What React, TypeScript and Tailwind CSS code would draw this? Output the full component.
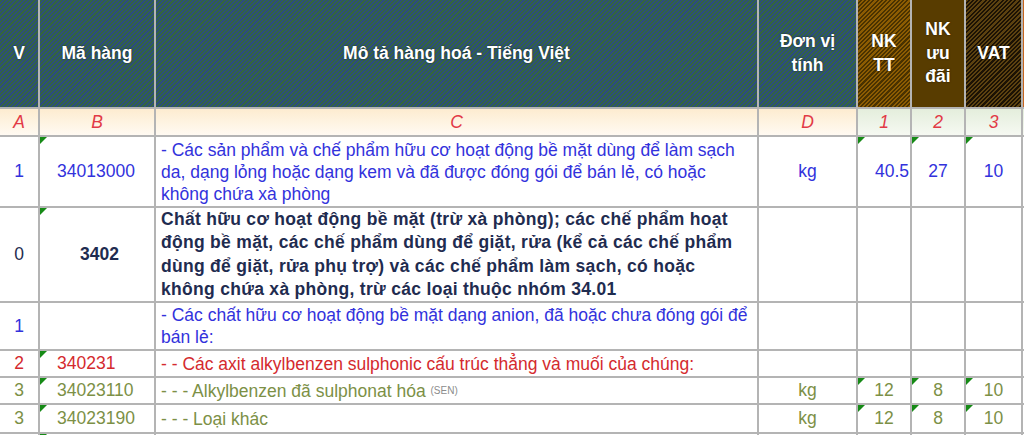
import clsx from "clsx"

const line = "border-r-2 border-b-2 border-[#b4b4b4]"

const hdrTeal =
  "bg-[repeating-linear-gradient(135deg,#346442_0px,#346442_1.5px,#2c4d7c_1.5px,#2c4d7c_3px)]"
const hdrTT =
  "bg-[repeating-linear-gradient(135deg,#8c5c02_0px,#8c5c02_1.5px,#4a3200_1.5px,#4a3200_3px)]"
const hdrUu = "bg-[#583c00]"
const hdrVat =
  "bg-[repeating-linear-gradient(135deg,#5c4210_0px,#5c4210_1.5px,#1c1204_1.5px,#1c1204_3px)]"

const letterBg = "bg-gradient-to-b from-[#fdecd0] to-[#fffaf2]"
const numBg = "bg-gradient-to-b from-[#e4eedc] to-[#f6f9f2]"

function Tri() {
  return (
    <span className="absolute left-0 top-0 h-0 w-0 border-t-[7px] border-r-[7px] border-t-[#168a16] border-r-transparent" />
  )
}

function Cell({
  children,
  className,
  tri,
}: {
  children?: React.ReactNode
  className?: string
  tri?: boolean
}) {
  return (
    <div className={clsx("relative flex items-center overflow-hidden", line, className)}>
      {tri && <Tri />}
      {children}
    </div>
  )
}

function Head({ children, bg }: { children: React.ReactNode; bg: string }) {
  return (
    <Cell
      className={clsx(
        "justify-center text-center font-bold text-white leading-[23.5px] [text-shadow:0_0_2px_rgba(0,0,0,0.6)]",
        bg
      )}
    >
      {children}
    </Cell>
  )
}

function Letter({ children, bg }: { children?: React.ReactNode; bg: string }) {
  return (
    <Cell className={clsx("justify-center italic text-[#e23a46]", bg)}>{children}</Cell>
  )
}

type Row = {
  v: string
  code: string
  desc: React.ReactNode
  unit?: string
  tt?: string
  uu?: string
  vat?: string
  color: string
  bold?: boolean
  codeTri?: boolean
  numTri?: boolean
}

const rows: Row[] = [
  {
    v: "1",
    code: "34013000",
    desc: "- Các sản phẩm và chế phẩm hữu cơ hoạt động bề mặt dùng để làm sạch da, dạng lỏng hoặc dạng kem và đã được đóng gói để bán lẻ, có hoặc không chứa xà phòng",
    unit: "kg",
    tt: "40.5",
    uu: "27",
    vat: "10",
    color: "text-[#3232dc]",
    codeTri: true,
    numTri: true,
  },
  {
    v: "0",
    code: "3402",
    desc: "Chất hữu cơ hoạt động bề mặt (trừ xà phòng); các chế phẩm hoạt động bề mặt, các chế phẩm dùng để giặt, rửa (kể cả các chế phẩm dùng để giặt, rửa phụ trợ) và các chế phẩm làm sạch, có hoặc không chứa xà phòng, trừ các loại thuộc nhóm 34.01",
    color: "text-[#1f2c50]",
    bold: true,
    codeTri: true,
  },
  {
    v: "1",
    code: "",
    desc: "- Các chất hữu cơ hoạt động bề mặt dạng anion, đã hoặc chưa đóng gói để bán lẻ:",
    color: "text-[#3232dc]",
  },
  {
    v: "2",
    code: "340231",
    desc: "- - Các axit alkylbenzen sulphonic cấu trúc thẳng và muối của chúng:",
    color: "text-[#d42a2e]",
    codeTri: true,
  },
  {
    v: "3",
    code: "34023110",
    desc: (
      <>
        - - - Alkylbenzen đã sulphonat hóa{" "}
        <sup className="relative -top-[3px] text-[10px] text-[#8c8c8c]">(SEN)</sup>
      </>
    ),
    unit: "kg",
    tt: "12",
    uu: "8",
    vat: "10",
    color: "text-[#7c9046]",
    codeTri: true,
    numTri: true,
  },
  {
    v: "3",
    code: "34023190",
    desc: "- - - Loại khác",
    unit: "kg",
    tt: "12",
    uu: "8",
    vat: "10",
    color: "text-[#7c9046]",
    codeTri: true,
    numTri: true,
  },
]

export default function App() {
  return (
    <div className="h-[435px] w-[1024px] overflow-hidden bg-white font-['Liberation_Sans',Arial,sans-serif] text-[17.5px]">
      <div className="grid w-[1053px] grid-cols-[40px_116px_603px_99px_54px_54px_57px_30px] grid-rows-[109px_28px_71px_95px_48px_27px_27px_29px_30px]">
        <Head bg={hdrTeal}>V</Head>
        <Head bg={hdrTeal}>Mã hàng</Head>
        <Head bg={hdrTeal}>Mô tả hàng hoá - Tiếng Việt</Head>
        <Head bg={hdrTeal}>
          Đơn vị
          <br />
          tính
        </Head>
        <Head bg={hdrTT}>
          NK
          <br />
          TT
        </Head>
        <Head bg={hdrUu}>
          NK
          <br />
          ưu
          <br />
          đãi
        </Head>
        <Head bg={hdrVat}>VAT</Head>
        <Head bg="bg-[#c8641c]"> </Head>

        <Letter bg={letterBg}>A</Letter>
        <Letter bg={letterBg}>B</Letter>
        <Letter bg={letterBg}>C</Letter>
        <Letter bg={letterBg}>D</Letter>
        <Letter bg={numBg}>1</Letter>
        <Letter bg={numBg}>2</Letter>
        <Letter bg={numBg}>3</Letter>
        <Letter bg={numBg} />

        {rows.map((r, i) => (
          <div key={i} className={clsx("contents", r.color)}>
            <Cell className="justify-center">{r.v}</Cell>
            <Cell
              tri={r.codeTri}
              className={r.bold ? "pl-[40px] font-bold" : "pl-[17px]"}
            >
              {r.code}
            </Cell>
            <Cell
              className={clsx(
                "pl-[5px] pr-[4px]",
                r.bold ? "font-bold leading-[23.3px] tracking-[0.3px]" : "leading-[22px]"
              )}
            >
              <div>{r.desc}</div>
            </Cell>
            <Cell className="justify-center">{r.unit}</Cell>
            <Cell tri={r.numTri} className={r.tt === "40.5" ? "justify-end pr-[1px]" : "justify-center"}>
              {r.tt}
            </Cell>
            <Cell tri={r.numTri} className="justify-center">
              {r.uu}
            </Cell>
            <Cell tri={r.numTri} className="justify-center">
              {r.vat}
            </Cell>
            <Cell />
          </div>
        ))}

        <Cell />
        <Cell tri />
        <Cell />
        <Cell />
        <Cell />
        <Cell />
        <Cell />
        <Cell />
      </div>
    </div>
  )
}
